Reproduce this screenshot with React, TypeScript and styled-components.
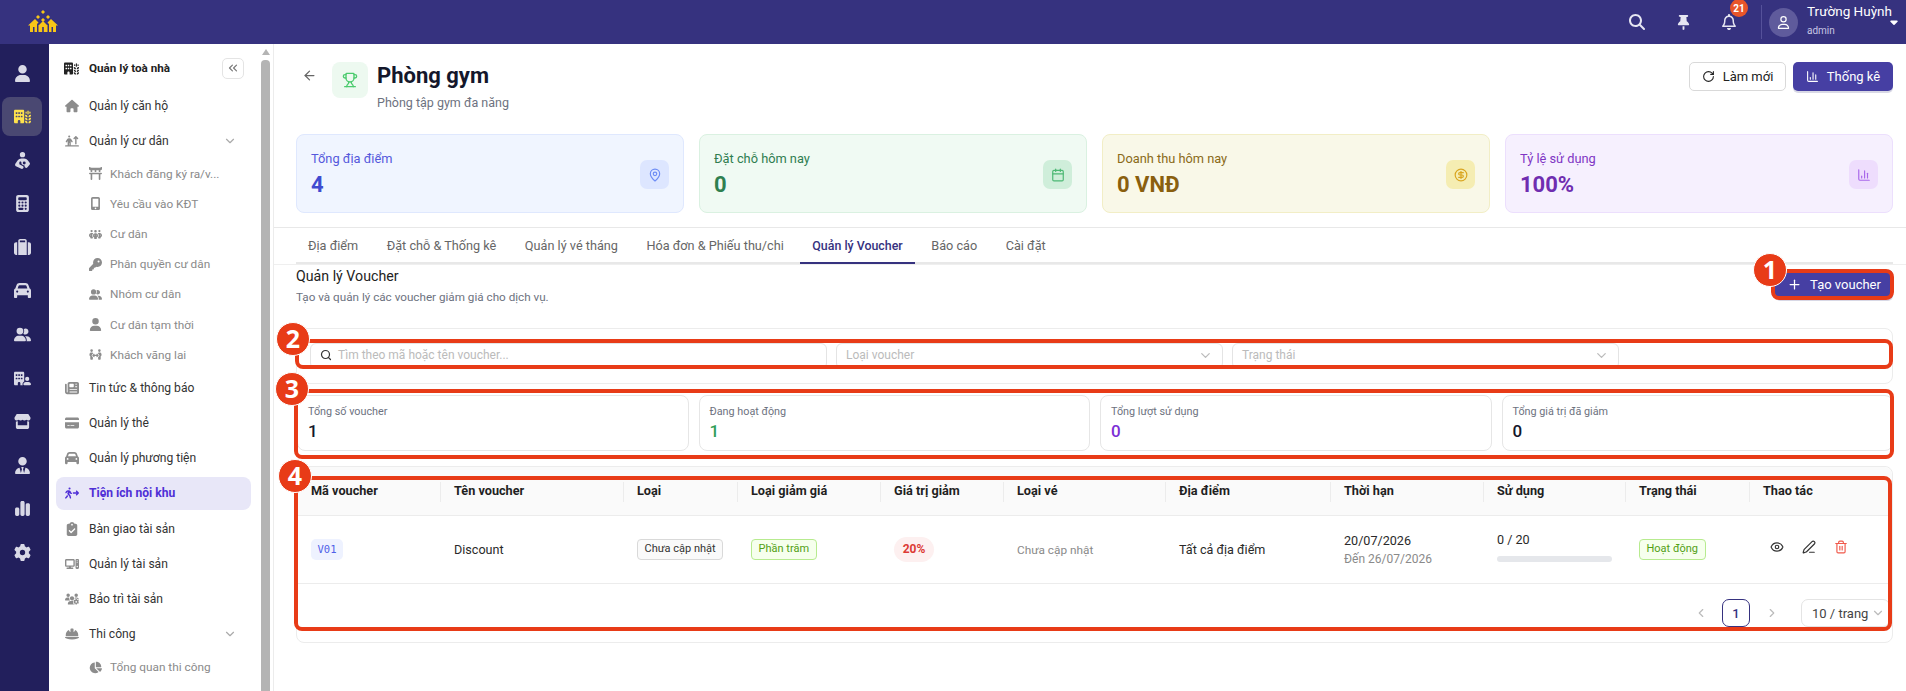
import React from 'react';
import styled, { createGlobalStyle } from 'styled-components';
import {
  ArrowLeft,
  BarChart3,
  Calendar,
  ChevronDown,
  ChevronLeft,
  ChevronRight,
  ChevronsLeft,
  CircleDollarSign,
  Eye,
  MapPin,
  PenLine,
  Plus,
  RotateCw,
  Search,
  Trash2,
  Trophy,
} from 'lucide-react';
import {
  FaBuildingUser,
  FaBuildingWheat,
  FaCalculator,
  FaCar,
  FaChartPie,
  FaChartSimple,
  FaClipboardCheck,
  FaComputer,
  FaCreditCard,
  FaGear,
  FaHelmetSafety,
  FaHouse,
  FaKey,
  FaMobileScreenButton,
  FaNewspaper,
  FaPeopleArrows,
  FaPeopleGroup,
  FaPersonArrowUpFromLine,
  FaPersonBreastfeeding,
  FaPersonWalkingArrowRight,
  FaStore,
  FaSuitcase,
  FaThumbtack,
  FaToriiGate,
  FaUser,
  FaUserGroup,
  FaUserTie,
  FaUsersGear,
  FaMagnifyingGlass,
  FaRegBell,
  FaRegUser,
  FaCaretDown,
} from 'react-icons/fa6';

const GlobalStyle = createGlobalStyle`
  html, body {
    margin: 0;
    padding: 0;
    height: 100%;
    overflow: hidden;
    background: #fff;
  }
  * { box-sizing: border-box; }
  body {
    font-family: Roboto, "Noto Sans", sans-serif;
    font-size: 13px;
    color: #222;
  }
`;

const Page = styled.div`
  width: 1906px;
  height: 691px;
  display: flex;
  flex-direction: column;
  overflow: hidden;
`;

/* top bar */
const TopBar = styled.header`
  height: 44px;
  flex: none;
  background: #36327f;
  display: flex;
  align-items: center;
  justify-content: space-between;
  padding: 0 6px 0 28px;
  color: #fff;
`;

const TopActions = styled.div`
  display: flex;
  align-items: center;
`;

const TopIcon = styled.span`
  position: relative;
  width: 46px;
  display: flex;
  justify-content: center;
  color: #e6e6f2;
`;

const Badge = styled.span`
  position: absolute;
  top: -15px;
  left: 24px;
  width: 18px;
  height: 18px;
  border-radius: 50%;
  background: #e8552a;
  color: #fff;
  font-size: 10px;
  font-weight: 700;
  display: flex;
  align-items: center;
  justify-content: center;
`;

const TopDivider = styled.span`
  width: 1px;
  height: 34px;
  background: #55519a;
  margin: 0 7px 0 9px;
`;

const Avatar = styled.span`
  width: 29px;
  height: 29px;
  border-radius: 50%;
  background: #5f5b9c;
  display: flex;
  align-items: center;
  justify-content: center;
  margin-right: 9px;
  color: #fff;
`;

const UserBox = styled.div`
  width: 81px;
  line-height: 1;
`;

const UserName = styled.div`
  font-size: 13.5px;
  margin-bottom: 7px;
  margin-top: -3px;
  white-space: nowrap;
`;

const UserRole = styled.div`
  font-size: 10px;
  color: #c8c6e4;
`;

/* body columns */
const Body = styled.div`
  flex: 1;
  min-height: 0;
  display: flex;
`;

const Rail = styled.nav`
  width: 49px;
  flex: none;
  background: #221f5c;
  padding: 9.5px 7px 0 2px;
  display: flex;
  flex-direction: column;
  gap: 4.6px;
`;

const RailItem = styled.div<{ $active?: boolean }>`
  height: 39px;
  flex: none;
  border-radius: 8px;
  display: flex;
  align-items: center;
  justify-content: center;
  color: ${p => (p.$active ? '#ffe14d' : '#d9d9e6')};
  background: ${p => (p.$active ? '#4a4872' : 'transparent')};
  font-size: 17px;
`;

const Menu = styled.aside`
  width: 212px;
  flex: none;
  overflow: hidden;
  padding: 5px 10px 0 7px;
  display: flex;
  flex-direction: column;
`;

const MenuHead = styled.div`
  height: 38px;
  flex: none;
  margin-bottom: 1px;
  display: flex;
  align-items: center;
  padding-left: 8px;
  font-weight: 700;
  font-size: 11.7px;
  color: #222;
  gap: 10px;
`;

const Collapse = styled.span`
  margin-left: auto;
  margin-right: 7px;
  width: 22px;
  height: 21px;
  border: 1px solid #e4e4e4;
  border-radius: 5px;
  color: #777;
  display: flex;
  align-items: center;
  justify-content: center;
`;

const MenuItem = styled.div<{ $active?: boolean }>`
  height: 33px;
  flex: none;
  margin: 1.15px 0;
  border-radius: 8px;
  display: flex;
  align-items: center;
  gap: 9px;
  padding: 0 14px 0 8px;
  font-size: 12.1px;
  white-space: nowrap;
  font-weight: ${p => (p.$active ? 700 : 400)};
  color: ${p => (p.$active ? '#4f2fd6' : '#333')};
  background: ${p => (p.$active ? '#e8e7f8' : 'transparent')};
`;

const MenuIcon = styled.span<{ $active?: boolean }>`
  width: 16px;
  flex: none;
  display: flex;
  justify-content: center;
  font-size: 14px;
  color: ${p => (p.$active ? '#4f2fd6' : '#8c8c8c')};
`;

const SubItem = styled.div`
  height: 30.2px;
  flex: none;
  display: flex;
  align-items: center;
  gap: 7px;
  padding-left: 31px;
  color: #8a8a8a;
  font-size: 11.8px;
  white-space: nowrap;
`;

const SubIcon = styled.span`
  width: 16px;
  flex: none;
  display: flex;
  justify-content: center;
  font-size: 13px;
  color: #8c8c8c;
`;

const MenuCaret = styled.span`
  margin-left: auto;
  color: #aaa;
  display: flex;
`;

const ScrollTrack = styled.div`
  width: 9px;
  flex: none;
  margin-right: 3px;
  padding-top: 5px;
  display: flex;
  flex-direction: column;
  align-items: center;
`;

const ScrollArrow = styled.span`
  width: 0;
  height: 0;
  border-left: 4.5px solid transparent;
  border-right: 4.5px solid transparent;
  border-bottom: 6px solid #b4b4b4;
`;

const ScrollThumb = styled.span`
  width: 9px;
  flex: 1;
  margin-top: 5px;
  background: #b4b4b4;
  border-radius: 4px 4px 0 0;
`;

const Main = styled.main`
  flex: 1;
  min-width: 0;
  border-left: 1px solid #ececec;
  overflow: hidden;
`;

/* page head */
const PageHead = styled.div`
  height: 90px;
  padding: 18px 13px 0 22px;
  display: flex;
  justify-content: space-between;
  align-items: flex-start;
`;

const HeadLeft = styled.div`
  display: flex;
  align-items: flex-start;
`;

const BackButton = styled.span`
  width: 26px;
  height: 26px;
  margin-right: 10px;
  display: flex;
  align-items: center;
  justify-content: center;
  color: #666;
`;

const TrophyBox = styled.span`
  width: 36px;
  height: 36px;
  border-radius: 8px;
  background: #edf9f0;
  color: #4ccb6e;
  display: flex;
  align-items: center;
  justify-content: center;
  margin-right: 9px;
`;

const PageTitle = styled.h1`
  margin: 0;
  font-size: 22px;
  line-height: 27px;
  font-weight: 700;
  color: #14172b;
`;

const PageSub = styled.p`
  margin: 6px 0 0;
  font-size: 12.5px;
  line-height: 16px;
  color: #6d7280;
`;

const HeadButtons = styled.div`
  display: flex;
  gap: 7px;
`;

const OutlineButton = styled.button`
  height: 29px;
  width: 97px;
  border: 1px solid #d9d9d9;
  border-radius: 5px;
  background: #fff;
  font: 13px Roboto, sans-serif;
  color: #222;
  display: flex;
  align-items: center;
  justify-content: center;
  gap: 8px;
  padding: 0;
`;

const PrimaryButton = styled.button<{ $width: number }>`
  height: 29px;
  width: ${p => p.$width}px;
  border: 0;
  border-radius: 5px;
  background: #463fa3;
  box-shadow: 0 2px 0 rgba(40, 40, 110, 0.18);
  font: 13px Roboto, sans-serif;
  color: #fff;
  display: flex;
  align-items: center;
  justify-content: center;
  gap: 8px;
  padding: 0;
`;

/* summary cards */
const SummaryRow = styled.div`
  padding: 0 13px 0 22px;
  display: grid;
  grid-template-columns: repeat(4, 1fr);
  gap: 15px;
  height: 79px;
`;

const SummaryCard = styled.div<{ $bg: string; $line: string }>`
  background: ${p => p.$bg};
  border: 1px solid ${p => p.$line};
  border-radius: 8px;
  padding: 2px 14px 0;
  display: flex;
  align-items: center;
  justify-content: space-between;
`;

const SummaryLabel = styled.div<{ $color: string }>`
  font-size: 12.8px;
  line-height: 16px;
  color: ${p => p.$color};
`;

const SummaryValue = styled.div<{ $color: string }>`
  margin-top: 5px;
  font-size: 22px;
  line-height: 26px;
  font-weight: 700;
  color: ${p => p.$color};
`;

const SummaryIcon = styled.span<{ $bg: string; $color: string }>`
  width: 29px;
  height: 29px;
  border-radius: 7px;
  background: ${p => p.$bg};
  color: ${p => p.$color};
  display: flex;
  align-items: center;
  justify-content: center;
`;

/* tabs */
const TabsBar = styled.div`
  margin-top: 14px;
  height: 38px;
  border-top: 1px solid #e8e8e8;
  border-bottom: 1px solid #efefef;
  padding: 0 13px 0 22px;
`;

const TabList = styled.div`
  height: 36px;
  border-bottom: 2px solid #e8e8e8;
  display: flex;
  gap: 4.5px;
`;

const Tab = styled.div<{ $active?: boolean }>`
  height: 36px;
  padding: 0 12px;
  font-size: ${p => (p.$active ? 12.4 : 12.7)}px;
  display: flex;
  align-items: center;
  color: ${p => (p.$active ? '#36327f' : '#666')};
  font-weight: ${p => (p.$active ? 500 : 400)};
  border-bottom: 2px solid ${p => (p.$active ? '#36327f' : 'transparent')};
`;

/* voucher panel */
const Panel = styled.section`
  padding: 0 13px 0 22px;
`;

const PanelHead = styled.div`
  height: 63px;
  padding-top: 4px;
  display: flex;
  justify-content: space-between;
`;

const PanelTitle = styled.h2`
  margin: 0;
  font-size: 14.2px;
  line-height: 15px;
  font-weight: 400;
  color: #222;
`;

const PanelSub = styled.p`
  margin: 6px 0 0;
  font-size: 11.7px;
  line-height: 15px;
  color: #6d7280;
`;

const Annotated = styled.div`
  position: relative;
`;

const Frame = styled.span<{ $top: number; $left: number; $right: number; $bottom: number }>`
  position: absolute;
  top: ${p => p.$top}px;
  left: ${p => p.$left}px;
  right: ${p => p.$right}px;
  bottom: ${p => p.$bottom}px;
  border: 4px solid #e83b17;
  border-radius: 8px;
  pointer-events: none;
`;

const Marker = styled.span<{ $x: number; $y: number }>`
  position: absolute;
  left: ${p => p.$x - 17}px;
  top: ${p => p.$y - 17}px;
  width: 34px;
  height: 34px;
  border-radius: 50%;
  background: #e83b17;
  border: 1.5px solid #fff;
  color: #fff;
  font: 700 25px/30px "Open Sans", sans-serif;
  text-align: center;
`;

const ButtonSlot = styled(Annotated)`
  margin-top: 1px;
  height: 29px;
`;

const FilterCard = styled(Annotated)`
  height: 56px;
  border: 1px solid #ececec;
  border-radius: 8px;
  padding: 14px 12px 0 13px;
  display: grid;
  grid-template-columns: 517px 387px 387px 1fr;
  gap: 9px;
`;

const Field = styled.div`
  height: 26px;
  border: 1px solid #e4e4e4;
  border-radius: 6px;
  display: flex;
  align-items: center;
  padding: 0 9px 2px;
  font-size: 12px;
  color: #bbb;
  gap: 6px;
`;

const FieldCaret = styled.span`
  margin-left: auto;
  display: flex;
  color: #bbb;
`;

const StatsRow = styled(Annotated)`
  margin: 11px 0 15px 1px;
  height: 56px;
  display: grid;
  grid-template-columns: repeat(4, 1fr);
  gap: 10px;
`;

const StatCard = styled.div`
  border: 1px solid #e6e6e6;
  border-radius: 8px;
  padding: 9px 10px 0;
`;

const StatLabel = styled.div`
  font-size: 10.8px;
  line-height: 14px;
  color: #6d7280;
`;

const StatValue = styled.div<{ $color: string }>`
  margin-top: 2px;
  font-size: 17px;
  line-height: 20px;
  font-weight: 500;
  color: ${p => p.$color};
`;

/* table */
const TableCard = styled(Annotated)`
  height: 177px;
  border: 1px solid #ececec;
  border-radius: 8px;
`;

const COLUMNS = '143px 183px 114px 143px 123px 162px 165px 153px 142px 124px 1fr';

const HeadRow = styled.div`
  height: 49px;
  display: grid;
  grid-template-columns: ${COLUMNS};
  background: #fafafa;
  border-bottom: 1px solid #ececec;
  border-radius: 8px 8px 0 0;
`;

const HeadCell = styled.div<{ $first?: boolean }>`
  position: relative;
  display: flex;
  align-items: center;
  padding: 0 0 2px 14px;
  font-size: 12.7px;
  font-weight: 700;
  color: #1f1f1f;
  &::before {
    content: '';
    display: ${p => (p.$first ? 'none' : 'block')};
    position: absolute;
    left: 0;
    top: 15px;
    height: 20px;
    width: 1px;
    background: #ececec;
  }
`;

const DataRow = styled.div`
  height: 68px;
  display: grid;
  grid-template-columns: ${COLUMNS};
  border-bottom: 1px solid #ececec;
`;

const Cell = styled.div<{ $muted?: boolean }>`
  display: flex;
  flex-direction: column;
  justify-content: center;
  align-items: flex-start;
  padding-left: 14px;
  font-size: ${p => (p.$muted ? 11.8 : 12.6)}px;
  color: ${p => (p.$muted ? '#8a8a8a' : '#2a2a2a')};
`;

const Code = styled.span`
  width: 32px;
  height: 21px;
  border-radius: 5px;
  background: #eef2ff;
  color: #4f5fe8;
  font: 10.5px/21px "DejaVu Sans Mono", monospace;
  text-align: center;
`;

const Tag = styled.span<{ $bg: string; $line: string; $color: string }>`
  height: 21px;
  padding: 0 6.5px;
  border-radius: 4px;
  background: ${p => p.$bg};
  border: 1px solid ${p => p.$line};
  color: ${p => p.$color};
  font-size: 11px;
  line-height: 18px;
  white-space: nowrap;
`;

const Discount = styled.span`
  width: 40px;
  height: 25px;
  border-radius: 13px;
  background: #fdf0f0;
  color: #dc3a35;
  font-size: 12px;
  font-weight: 700;
  line-height: 25px;
  text-align: center;
`;

const DateMain = styled.span`
  line-height: 16px;
`;

const DateEnd = styled.span`
  margin-top: 3px;
  font-size: 12px;
  line-height: 15px;
  color: #8a8a8a;
`;

const UsageText = styled.span`
  line-height: 16px;
  margin-top: -5px;
`;

const UsageBar = styled.span`
  margin-top: 8px;
  width: 115px;
  height: 6px;
  border-radius: 3px;
  background: #e5e7eb;
`;

const ActionRow = styled.div`
  display: flex;
  gap: 16px;
  padding-left: 6px;
  margin-top: -6px;
`;

const ActionIcon = styled.span<{ $danger?: boolean }>`
  width: 16px;
  display: flex;
  justify-content: center;
  color: ${p => (p.$danger ? '#f0584a' : '#333')};
`;

const Pager = styled.div`
  display: flex;
  align-items: center;
  justify-content: flex-end;
  padding: 15px 2px 0 0;
  color: #bbb;
`;

const PageArrow = styled.span`
  width: 27px;
  display: flex;
  justify-content: center;
`;

const PageCurrent = styled.span`
  width: 28px;
  height: 28px;
  margin: 0 8px;
  border: 1px solid #36327f;
  border-radius: 7px;
  color: #36327f;
  display: flex;
  align-items: center;
  justify-content: center;
  font-size: 13px;
  font-weight: 500;
`;

const PageSize = styled.span`
  margin-left: 16px;
  width: 89px;
  height: 28px;
  border: 1px solid #e4e4e4;
  border-radius: 7px;
  color: #444;
  font-size: 13px;
  display: flex;
  align-items: center;
  justify-content: space-between;
  padding: 0 4px 0 10px;
`;

const Logo = () => (
  <svg width="30" height="24" viewBox="0 0 30 24" fill="#f8c617">
    <path d="M15 0l2 2-2 2-2-2zM10 5l2 2-2 2-2-2zM20 5l2 2-2 2-2-2zM15 8l2 2-2 2-2-2z" />
    <path d="M0 15.5L7 9l3.5 3.5-1.5 1.5v8H2v-6.5zM30 15.5L23 9l-3.5 3.5 1.5 1.5v8h7v-6.5z" />
    <path d="M15 11l4.5 4.5V22h-9v-6.5z" />
    <path d="M5 17h1.5v5H5zM23.500 17H25v5h-1.500zM14.200 17h1.600v5h-1.600z" fill="#36327f" />
  </svg>
);

const railIcons = [
  <FaUser key="user" />,
  <FaBuildingWheat key="building" />,
  <FaPersonBreastfeeding key="care" />,
  <FaCalculator key="calc" />,
  <FaSuitcase key="case" />,
  <FaCar key="car" />,
  <FaUserGroup key="group" />,
  <FaBuildingUser key="tenant" />,
  <FaStore key="store" />,
  <FaUserTie key="staff" />,
  <FaChartSimple key="chart" />,
  <FaGear key="gear" />,
];

const residentSubs: [string, React.ReactNode][] = [
  ['Khách đăng ký ra/v...', <FaToriiGate />],
  ['Yêu cầu vào KĐT', <FaMobileScreenButton />],
  ['Cư dân', <FaPeopleGroup />],
  ['Phân quyền cư dân', <FaKey />],
  ['Nhóm cư dân', <FaUserGroup />],
  ['Cư dân tạm thời', <FaUser />],
  ['Khách vãng lai', <FaPeopleArrows />],
];

const middleItems: [string, React.ReactNode, boolean?][] = [
  ['Tin tức & thông báo', <FaNewspaper />],
  ['Quản lý thẻ', <FaCreditCard />],
  ['Quản lý phương tiện', <FaCar />],
  ['Tiện ích nội khu', <FaPersonWalkingArrowRight />, true],
  ['Bàn giao tài sản', <FaClipboardCheck />],
  ['Quản lý tài sản', <FaComputer />],
  ['Bảo trì tài sản', <FaUsersGear />],
];

const summaries = [
  { label: 'Tổng địa điểm', value: '4', bg: '#f0f5ff', line: '#dfe8fe', text: '#5458dc', strong: '#3f4bd0', box: '#dde6ff', icon: '#6d8cf5', Icon: MapPin },
  { label: 'Đặt chỗ hôm nay', value: '0', bg: '#f0faf3', line: '#daf1e1', text: '#2f7d50', strong: '#2f8050', box: '#cfeeda', icon: '#4cb874', Icon: Calendar },
  { label: 'Doanh thu hôm nay', value: '0 VNĐ', bg: '#f9f8e8', line: '#f2eec6', text: '#8a6a18', strong: '#8a5f0e', box: '#f5edb2', icon: '#d9a520', Icon: CircleDollarSign },
  { label: 'Tỷ lệ sử dụng', value: '100%', bg: '#f6f0fe', line: '#ecdffd', text: '#8035c4', strong: '#6f2db0', box: '#eeddfd', icon: '#a968ea', Icon: BarChart3 },
];

const tabs = ['Địa điểm', 'Đặt chỗ & Thống kê', 'Quản lý vé tháng', 'Hóa đơn & Phiếu thu/chi', 'Quản lý Voucher', 'Báo cáo', 'Cài đặt'];

const stats = [
  { label: 'Tổng số voucher', value: '1', color: '#14172b' },
  { label: 'Đang hoạt động', value: '1', color: '#2f9e58' },
  { label: 'Tổng lượt sử dụng', value: '0', color: '#7c2fd6' },
  { label: 'Tổng giá trị đã giảm', value: '0', color: '#14172b' },
];

const columns = ['Mã voucher', 'Tên voucher', 'Loại', 'Loại giảm giá', 'Giá trị giảm', 'Loại vé', 'Địa điểm', 'Thời hạn', 'Sử dụng', 'Trạng thái', 'Thao tác'];

const App = () => {
  return (
    <Page>
      <GlobalStyle />
      <TopBar>
        <Logo />
        <TopActions>
          <TopIcon><FaMagnifyingGlass size={16} /></TopIcon>
          <TopIcon><FaThumbtack size={15} /></TopIcon>
          <TopIcon>
            <FaRegBell size={16} />
            <Badge>21</Badge>
          </TopIcon>
          <TopDivider />
          <Avatar><FaRegUser size={13} /></Avatar>
          <UserBox>
            <UserName>Trường Huỳnh</UserName>
            <UserRole>admin</UserRole>
          </UserBox>
          <FaCaretDown size={12} />
        </TopActions>
      </TopBar>

      <Body>
        <Rail>
          {railIcons.map((icon, i) => (
            <RailItem key={i} $active={i === 1}>{icon}</RailItem>
          ))}
        </Rail>

        <Menu>
          <MenuHead>
            <FaBuildingWheat size={15} />
            Quản lý toà nhà
            <Collapse><ChevronsLeft size={14} /></Collapse>
          </MenuHead>
          <MenuItem>
            <MenuIcon><FaHouse /></MenuIcon>
            Quản lý căn hộ
          </MenuItem>
          <MenuItem>
            <MenuIcon><FaPersonArrowUpFromLine /></MenuIcon>
            Quản lý cư dân
            <MenuCaret><ChevronDown size={14} /></MenuCaret>
          </MenuItem>
          {residentSubs.map(([label, icon]) => (
            <SubItem key={label}>
              <SubIcon>{icon}</SubIcon>
              {label}
            </SubItem>
          ))}
          {middleItems.map(([label, icon, active]) => (
            <MenuItem key={label} $active={active}>
              <MenuIcon $active={active}>{icon}</MenuIcon>
              {label}
            </MenuItem>
          ))}
          <MenuItem>
            <MenuIcon><FaHelmetSafety /></MenuIcon>
            Thi công
            <MenuCaret><ChevronDown size={14} /></MenuCaret>
          </MenuItem>
          <SubItem>
            <SubIcon><FaChartPie /></SubIcon>
            Tổng quan thi công
          </SubItem>
        </Menu>

        <ScrollTrack>
          <ScrollArrow />
          <ScrollThumb />
        </ScrollTrack>

        <Main>
          <PageHead>
            <HeadLeft>
              <BackButton><ArrowLeft size={15} /></BackButton>
              <TrophyBox><Trophy size={16} /></TrophyBox>
              <div>
                <PageTitle>Phòng gym</PageTitle>
                <PageSub>Phòng tập gym đa năng</PageSub>
              </div>
            </HeadLeft>
            <HeadButtons>
              <OutlineButton><RotateCw size={13} />Làm mới</OutlineButton>
              <PrimaryButton $width={100}><BarChart3 size={13} />Thống kê</PrimaryButton>
            </HeadButtons>
          </PageHead>

          <SummaryRow>
            {summaries.map(({ Icon, ...s }) => (
              <SummaryCard key={s.label} $bg={s.bg} $line={s.line}>
                <div>
                  <SummaryLabel $color={s.text}>{s.label}</SummaryLabel>
                  <SummaryValue $color={s.strong}>{s.value}</SummaryValue>
                </div>
                <SummaryIcon $bg={s.box} $color={s.icon}><Icon size={14} /></SummaryIcon>
              </SummaryCard>
            ))}
          </SummaryRow>

          <TabsBar>
            <TabList>
              {tabs.map(tab => (
                <Tab key={tab} $active={tab === 'Quản lý Voucher'}>{tab}</Tab>
              ))}
            </TabList>
          </TabsBar>

          <Panel>
            <PanelHead>
              <div>
                <PanelTitle>Quản lý Voucher</PanelTitle>
                <PanelSub>Tạo và quản lý các voucher giảm giá cho dịch vụ.</PanelSub>
              </div>
              <ButtonSlot>
                <PrimaryButton $width={118}><Plus size={15} />Tạo voucher</PrimaryButton>
                <Frame $top={-1} $left={-4} $right={-1} $bottom={-1} />
                <Marker $x={-5} $y={0}>1</Marker>
              </ButtonSlot>
            </PanelHead>

            <FilterCard>
              <Field>
                <Search size={12} color="#333" strokeWidth={2.4} />
                Tìm theo mã hoặc tên voucher...
              </Field>
              <Field>
                Loại voucher
                <FieldCaret><ChevronDown size={15} /></FieldCaret>
              </Field>
              <Field>
                Trạng thái
                <FieldCaret><ChevronDown size={15} /></FieldCaret>
              </Field>
              <Frame $top={10} $left={-2} $right={-1} $bottom={14} />
              <Marker $x={-4} $y={10}>2</Marker>
            </FilterCard>

            <StatsRow>
              {stats.map(s => (
                <StatCard key={s.label}>
                  <StatLabel>{s.label}</StatLabel>
                  <StatValue $color={s.color}>{s.value}</StatValue>
                </StatCard>
              ))}
              <Frame $top={-6} $left={-3} $right={-1} $bottom={-8} />
              <Marker $x={-5} $y={-6}>3</Marker>
            </StatsRow>

            <TableCard>
              <HeadRow>
                {columns.map((c, i) => (
                  <HeadCell key={c} $first={i === 0}>{c}</HeadCell>
                ))}
              </HeadRow>
              <DataRow>
                <Cell><Code>V01</Code></Cell>
                <Cell>Discount</Cell>
                <Cell><Tag $bg="#fafafa" $line="#d9d9d9" $color="#333">Chưa cập nhật</Tag></Cell>
                <Cell><Tag $bg="#f6ffed" $line="#b7eb8f" $color="#52a014">Phần trăm</Tag></Cell>
                <Cell><Discount>20%</Discount></Cell>
                <Cell $muted>Chưa cập nhật</Cell>
                <Cell>Tất cả địa điểm</Cell>
                <Cell>
                  <DateMain>20/07/2026</DateMain>
                  <DateEnd>Đến 26/07/2026</DateEnd>
                </Cell>
                <Cell>
                  <UsageText>0 / 20</UsageText>
                  <UsageBar />
                </Cell>
                <Cell><Tag $bg="#f6ffed" $line="#b7eb8f" $color="#52a014">Hoạt động</Tag></Cell>
                <Cell>
                  <ActionRow>
                    <ActionIcon><Eye size={14} /></ActionIcon>
                    <ActionIcon><PenLine size={14} /></ActionIcon>
                    <ActionIcon $danger><Trash2 size={14} /></ActionIcon>
                  </ActionRow>
                </Cell>
              </DataRow>
              <Pager>
                <PageArrow><ChevronLeft size={14} /></PageArrow>
                <PageCurrent>1</PageCurrent>
                <PageArrow><ChevronRight size={14} /></PageArrow>
                <PageSize>10 / trang<ChevronDown size={14} color="#bbb" /></PageSize>
              </Pager>
              <Frame $top={9} $left={-3} $right={0} $bottom={11} />
              <Marker $x={-2} $y={9}>4</Marker>
            </TableCard>
          </Panel>
        </Main>
      </Body>
    </Page>
  );
};

export default App;
